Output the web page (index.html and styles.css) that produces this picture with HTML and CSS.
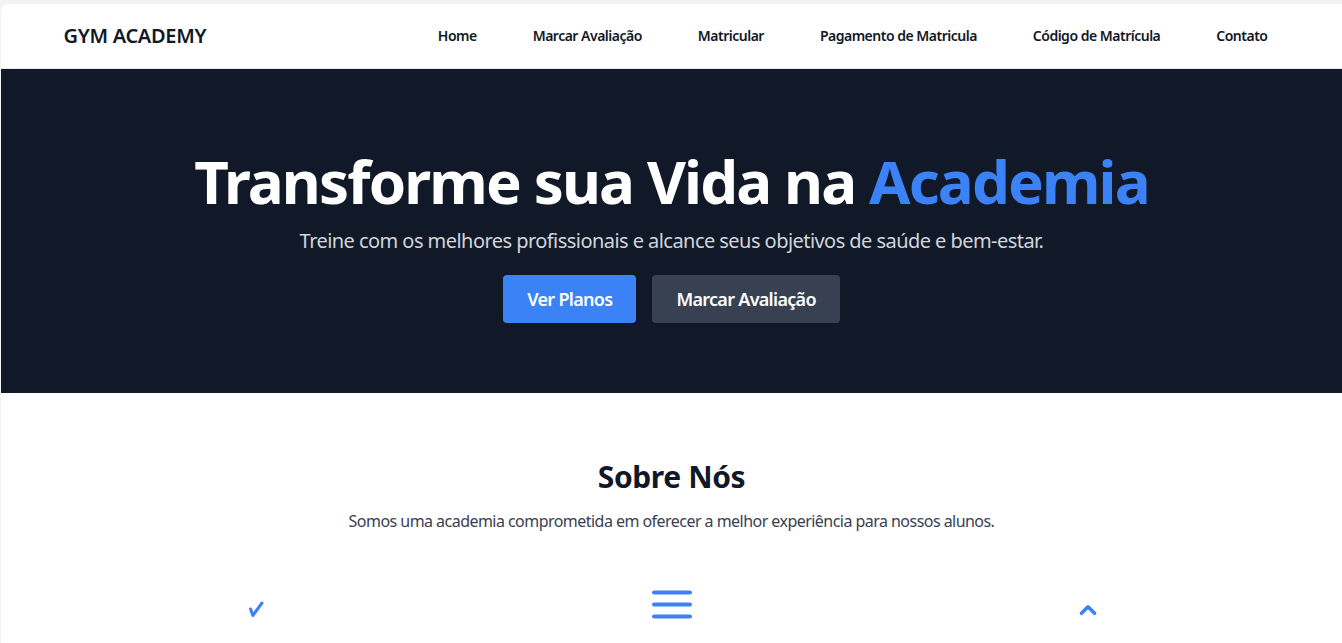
FILE: index.html
```html
<!DOCTYPE html>
<html lang="pt-BR">
<head>
<meta charset="utf-8">
<title>Gym Academy</title>
<link rel="stylesheet" href="styles.css">
</head>
<body>
<div class="frame">
  <header class="navbar">
    <div class="container nav-inner">
      <a class="logo" href="#">GYM ACADEMY</a>
      <nav class="nav-links">
        <a href="#">Home</a>
        <a href="#">Marcar Avaliação</a>
        <a href="#">Matricular</a>
        <a href="#">Pagamento de Matricula</a>
        <a href="#">Código de Matrícula</a>
        <a href="#">Contato</a>
      </nav>
    </div>
  </header>

  <section class="hero">
    <h1 class="hero-title">Transforme sua Vida na <span class="accent">Academia</span></h1>
    <p class="hero-sub">Treine com os melhores profissionais e alcance seus objetivos de saúde e bem-estar.</p>
    <div class="hero-actions">
      <a class="btn btn-primary" href="#">Ver Planos</a>
      <a class="btn btn-dark" href="#">Marcar Avaliação</a>
    </div>
  </section>

  <section class="about">
    <div class="container">
      <h2 class="about-title">Sobre Nós</h2>
      <p class="about-text">Somos uma academia comprometida em oferecer a melhor experiência para nossos alunos.</p>
      <div class="features">
        <div class="feature">
          <svg class="icon" width="16" height="30" viewBox="0 0 16 30"><path d="M2.6 19 L4.8 25.5 L14 13" fill="none" stroke="#3b82f6" stroke-width="3" stroke-linecap="round" stroke-linejoin="round"/></svg>
        </div>
        <div class="feature">
          <svg class="icon" width="42" height="30" viewBox="0 0 42 30"><g stroke="#3b82f6" stroke-width="4" stroke-linecap="round"><line x1="3" y1="2.5" x2="39" y2="2.5"/><line x1="3" y1="14.5" x2="39" y2="14.5"/><line x1="3" y1="26.5" x2="39" y2="26.5"/></g></svg>
        </div>
        <div class="feature">
          <svg class="icon" width="20" height="30" viewBox="0 0 20 30"><path d="M3.5 23.3 L10 16.8 L16.5 23.3" fill="none" stroke="#3b82f6" stroke-width="3.6" stroke-linecap="round" stroke-linejoin="round"/></svg>
        </div>
      </div>
    </div>
  </section>
</div>
</body>
</html>
```

FILE: styles.css
```css
* { box-sizing: border-box; }

html, body {
  margin: 0;
  padding: 0;
  height: 100%;
  overflow: hidden;
}

body {
  background: #f3f3f3;
  font-family: "Noto Sans", "Open Sans", Arial, sans-serif;
  color: #111827;
  padding-top: 4px;
  padding-left: 1px;
}

.frame {
  background: #ffffff;
  border-top-left-radius: 8px;
  min-height: 100%;
  overflow: hidden;
}

.container {
  max-width: 1280px;
  margin: 0 auto;
  padding: 0 32px;
}

.navbar {
  background: #ffffff;
  height: 65px;
  border-bottom: 1px solid #e5e7eb;
}

.nav-inner {
  height: 100%;
  display: flex;
  align-items: center;
  justify-content: space-between;
  padding-bottom: 1px;
}

.logo {
  font-size: 20px;
  font-weight: 600;
  color: #111827;
  text-decoration: none;
  letter-spacing: -0.3px;
}

.nav-links {
  display: flex;
  gap: 32px;
}

.nav-links a {
  font-size: 14px;
  font-weight: 600;
  letter-spacing: -0.5px;
  color: #111827;
  text-decoration: none;
  padding: 0 12px;
}

.hero {
  background: #111827;
  text-align: center;
  padding: 82px 16px 70px;
}

.hero-title {
  margin: 0 0 16px;
  font-size: 60px;
  line-height: 1;
  font-weight: 700;
  letter-spacing: -1.85px;
  color: #ffffff;
}

.accent { color: #3b82f6; }

.hero-sub {
  margin: 0 0 20px;
  font-size: 20px;
  line-height: 28px;
  letter-spacing: -0.55px;
  color: #d1d5db;
}

.hero-actions {
  display: flex;
  justify-content: center;
  gap: 16px;
}

.btn {
  display: inline-block;
  height: 48px;
  line-height: 48px;
  padding: 0 24px;
  border-radius: 4px;
  font-size: 18px;
  font-weight: 600;
  letter-spacing: -0.7px;
  color: #ffffff;
  text-decoration: none;
}

.btn-primary { background: #3b82f6; }
.btn-dark { background: #374151; }

.about {
  background: #ffffff;
  padding: 66px 0 0;
  text-align: center;
}

.about-title {
  margin: 0 0 14px;
  font-size: 30px;
  line-height: 36px;
  font-weight: 700;
  letter-spacing: -0.4px;
  color: #111827;
}

.about-text {
  margin: 0 0 57px;
  font-size: 16px;
  line-height: 24px;
  letter-spacing: -0.54px;
  color: #374151;
}

.features {
  display: grid;
  grid-template-columns: repeat(3, 1fr);
  gap: 32px;
  align-items: start;
}

.feature {
  display: flex;
  justify-content: center;
}

.icon { display: block; }
```
